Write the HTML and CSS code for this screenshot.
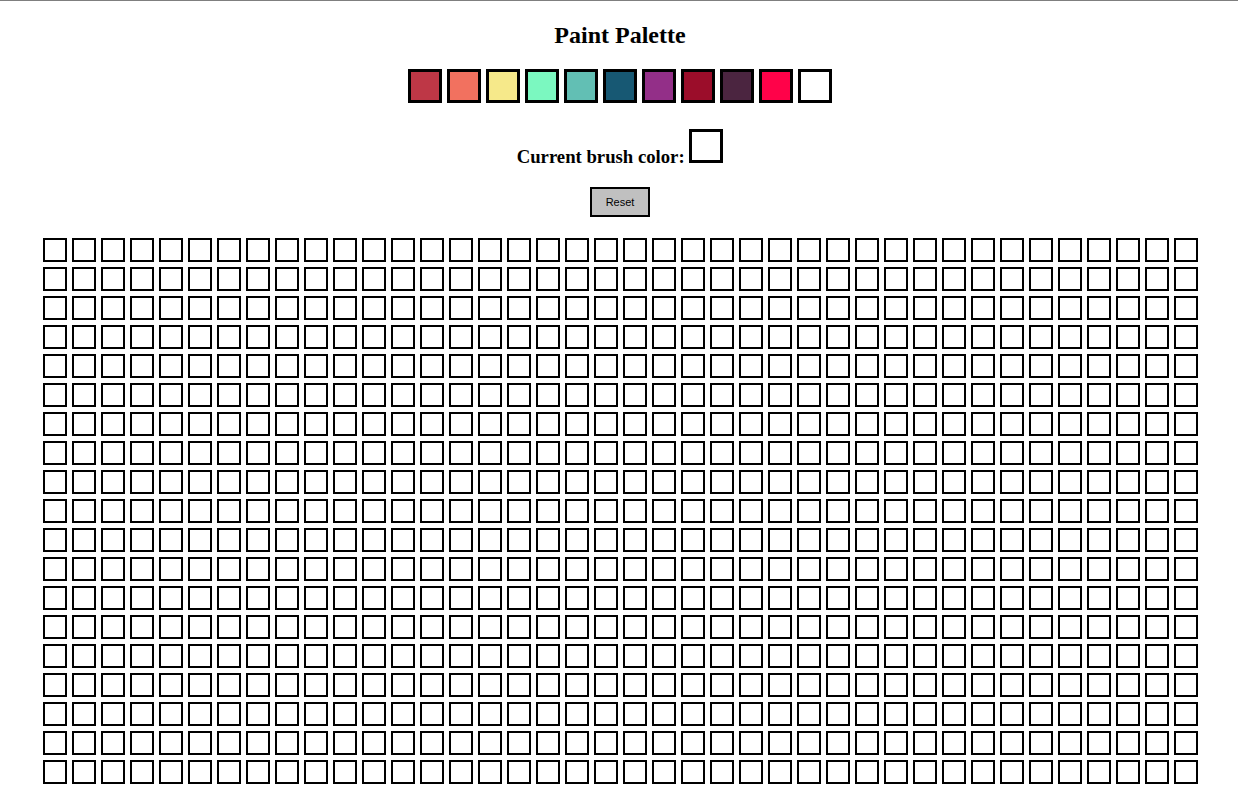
FILE: index.html
```html
<!DOCTYPE html>
<html lang="en">
<head>
<meta charset="utf-8">
<title>Paint Palette</title>
<link rel="stylesheet" href="styles.css">
</head>
<body>
<h1 class="title">Paint Palette</h1>
<div class="palette">
  <div class="swatch" style="background:#be3746"></div>
  <div class="swatch" style="background:#f2715f"></div>
  <div class="swatch" style="background:#f6e98a"></div>
  <div class="swatch" style="background:#7bf8c0"></div>
  <div class="swatch" style="background:#62bfb4"></div>
  <div class="swatch" style="background:#175873"></div>
  <div class="swatch" style="background:#932f88"></div>
  <div class="swatch" style="background:#9b0d2a"></div>
  <div class="swatch" style="background:#4b2540"></div>
  <div class="swatch" style="background:#ff0249"></div>
  <div class="swatch" style="background:#ffffff"></div>
</div>
<h3 class="brush">Current brush color: <span class="brush-box"></span></h3>
<button class="reset" type="button">Reset</button>
<div class="canvas" id="canvas"></div>
<script src="script.js"></script>
</body>
</html>
```
FILE: styles.css
```css
html {
  overflow: hidden;
  border-top: 1px solid #7f7f7f;
  background: #fff;
}
body {
  margin: 0;
  padding: 20px 0 0 2px;
  font-family: "Liberation Serif", "Times New Roman", serif;
  color: #000;
  display: flex;
  flex-direction: column;
  align-items: center;
}
.title {
  margin: 0;
  font-size: 24px;
  line-height: 28px;
  font-weight: bold;
}
.palette {
  margin-top: 20px;
  display: flex;
  gap: 5px;
}
.swatch {
  width: 28px;
  height: 28px;
  border: 3px solid #000;
  cursor: pointer;
}
.brush {
  margin: 26px 0 0;
  font-size: 18.72px;
  font-weight: bold;
  line-height: normal;
}
.brush-box {
  display: inline-block;
  width: 28px;
  height: 28px;
  border: 3px solid #000;
  background: #fff;
}
.reset {
  margin-top: 19px;
  width: 60px;
  height: 30px;
  padding: 0;
  border: 2px solid #000;
  background: #c0c0c0;
  font-family: "Liberation Sans", Arial, sans-serif;
  font-size: 11px;
  color: #000;
}
.canvas {
  align-self: flex-start;
  margin: 21px 0 0 41px;
  display: grid;
  grid-template-columns: repeat(40, 24px);
  grid-auto-rows: 24px;
  gap: 5px;
}
.cell {
  border: 2px solid #000;
  background: #fff;
}
```
FILE: script.js
```js
var canvas = document.getElementById('canvas');
for (var i = 0; i < 40 * 20; i++) {
  var cell = document.createElement('div');
  cell.className = 'cell';
  canvas.appendChild(cell);
}
var brush = document.querySelector('.brush-box');
document.querySelectorAll('.swatch').forEach(function (s) {
  s.addEventListener('click', function () {
    brush.style.background = s.style.background;
  });
});
canvas.addEventListener('click', function (e) {
  if (e.target.classList.contains('cell')) {
    e.target.style.background = brush.style.background || '#fff';
  }
});
document.querySelector('.reset').addEventListener('click', function () {
  canvas.querySelectorAll('.cell').forEach(function (c) { c.style.background = '#fff'; });
});
```
